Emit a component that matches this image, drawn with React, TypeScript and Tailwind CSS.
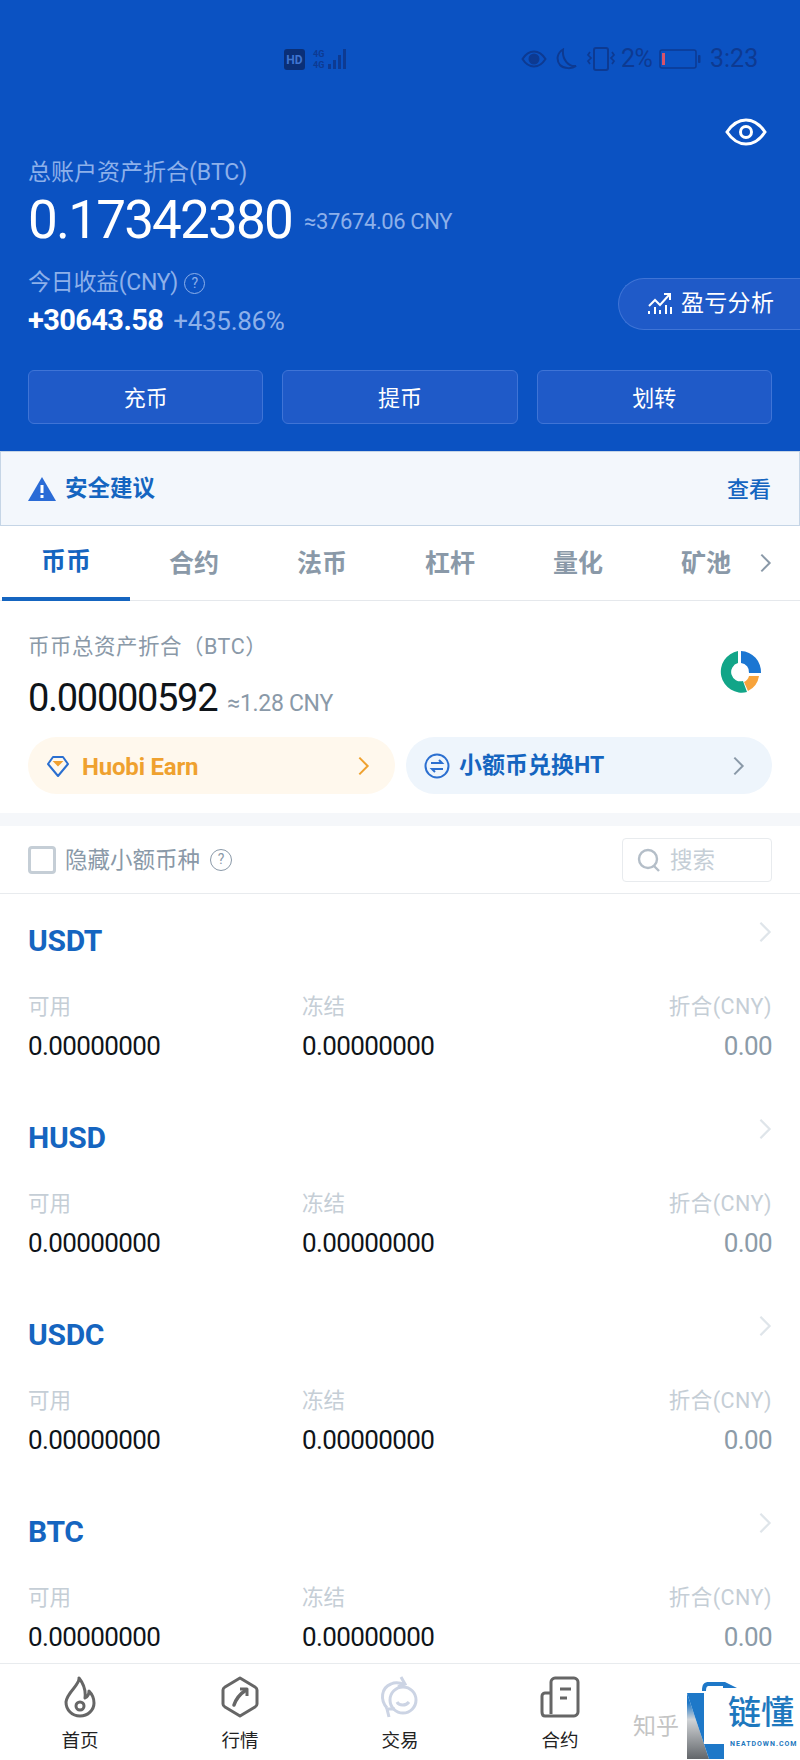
const cjk = "font-['Roboto','Noto_Sans_CJK_SC',sans-serif]";

const tabs = ["币币", "合约", "法币", "杠杆", "量化", "矿池"];
const coins = ["USDT", "HUSD", "USDC", "BTC"];

function Chevron({ className }: { className: string }) {
  return (
    <svg viewBox="0 0 14 24" fill="none" stroke="currentColor" strokeWidth="2.4" className={className}>
      <path d="M2 2l10 10L2 22" />
    </svg>
  );
}

function StatusBar() {
  const c = "#0d3a92";
  return (
    <div className="mt-[48px] h-[22px] flex items-center justify-between pl-[284px] pr-[44px] text-[#0d3a92]">
      <svg width="66" height="22" viewBox="0 0 66 22">
        <rect width="21" height="21" y="1" rx="3" fill="#0a2f77" />
        <text x="10.5" y="16" textAnchor="middle" fontSize="12" fontWeight="700" fill="#3f74d0" fontFamily="Roboto">HD</text>
        <text x="29" y="9" fontSize="9" fontWeight="700" fill={c} fontFamily="Roboto">4G</text>
        <text x="29" y="20" fontSize="9" fontWeight="700" fill={c} fontFamily="Roboto">4G</text>
        <rect x="44" y="16" width="3" height="5" fill={c} />
        <rect x="49" y="12" width="3" height="9" fill={c} />
        <rect x="54" y="7" width="3" height="14" fill={c} />
        <rect x="59" y="1" width="3" height="20" fill={c} />
      </svg>
      <div className="flex items-center">
        <svg width="26" height="18" viewBox="0 0 26 18" fill="none" stroke={c} strokeWidth="2">
          <path d="M1.5 9C5 3.5 9 1.5 13 1.5S21 3.5 24.5 9C21 14.5 17 16.500 13 16.500S5 14.500 1.5 9z" />
          <circle cx="13" cy="9" r="4.500" fill={c} />
        </svg>
        <svg width="24" height="22" viewBox="0 0 24 22" fill="none" stroke={c} strokeWidth="2" className="ml-[7px]">
          <path d="M9 1.500C3 5 2 12 6 17c4 4 12 4 16 1-7 1-14-6-13-16.500z" />
        </svg>
        <svg width="30" height="24" viewBox="0 0 30 24" fill="none" stroke={c} strokeWidth="2" className="ml-[8px]">
          <rect x="8" y="1" width="14" height="22" rx="2" />
          <path d="M4 5l-2 3 3 3-3 3 2 3M26 5l2 3-3 3 3 3-2 3" strokeWidth="1.700" />
        </svg>
        <span className={`${cjk} ml-[5px] text-[25px] leading-[22px] tracking-[-0.500px] w-[37px]`}>2%</span>
        <svg width="42" height="20" viewBox="0 0 42 20" fill="none" className="ml-[1px]">
          <rect x="1" y="1" width="36" height="18" rx="2" stroke={c} strokeWidth="1.500" />
          <rect x="3" y="4" width="3" height="12" fill="#d8536a" />
          <rect x="39" y="6" width="2.500" height="8" rx="1" fill={c} />
        </svg>
        <span className={`${cjk} ml-[9px] text-[25px] leading-[22px] w-[46px]`}>3:23</span>
      </div>
    </div>
  );
}

function Header() {
  return (
    <div className="h-[451px] bg-[#0b52c2] flex flex-col">
      <StatusBar />
      <svg width="42" height="28" viewBox="0 0 42 28" fill="none" stroke="white" strokeWidth="3" className="mt-[48px] self-end mr-[33px]">
        <path d="M2 14C8 5 14 2 21 2s13 3 19 12c-6 9-12 12-19 12S8 23 2 14z" />
        <circle cx="21" cy="14" r="5.500" />
      </svg>
      <div className={`${cjk} mt-[12px] px-[28px] text-[23px] leading-[30px] text-[#8db0ea]`}>总账户资产折合(BTC)</div>
      <div className={`${cjk} mt-[7px] px-[28px] h-[50px] flex items-center`}>
        <span className="text-[53px] leading-[50px] tracking-[-1.800px] text-white">0.17342380</span>
        <span className="ml-[12px] mt-[3px] text-[22px] tracking-[-0.400px] text-[#8db0ea]">≈37674.06 CNY</span>
      </div>
      <div className="flex justify-between">
        <div className={`${cjk} pl-[28px]`}>
          <div className="mt-[23px] flex items-center text-[23px] leading-[30px] tracking-[-0.300px] text-[#8db0ea]">
            今日收益(CNY)
            <span className="ml-[6px] w-[21px] h-[21px] rounded-full border-[1.500px] border-[#8db0ea] text-[14px] leading-[18px] text-center">?</span>
          </div>
          <div className="mt-[7px] flex items-baseline h-[30px] leading-[30px]">
            <span className="text-[29px] font-bold tracking-[-0.600px] text-white">+30643.58</span>
            <span className="ml-[10px] text-[26px] tracking-[-0.300px] text-[#8db0ea]">+435.86%</span>
          </div>
        </div>
        <div className={`${cjk} self-end mb-[5px] w-[182px] h-[52px] rounded-l-[26px] border border-r-0 border-[#3f74d6] bg-[#1f5ac8] flex items-center pl-[28px] text-[23px] text-white`}>
          <svg width="26" height="24" viewBox="0 0 26 24" fill="none" stroke="white" strokeWidth="2">
            <path d="M2 14l6-6 5 5 9-10M17 2h6v6" />
            <path d="M2 22v-3M8 22v-7M13 22v-4M19 22v-9M24 22v-7" />
          </svg>
          <span className="ml-[8px] pt-[1px] tracking-[0.300px]">盈亏分析</span>
        </div>
      </div>
      <div className={`${cjk} mt-[35px] px-[28px] grid grid-cols-3 gap-[19px]`}>
        {["充币", "提币", "划转"].map((t) => (
          <div key={t} className="h-[54px] pt-[3px] rounded-[6px] border border-[#3f74d6] bg-[#1f5ac8] flex items-center justify-center text-[22px] text-white">
            {t}
          </div>
        ))}
      </div>
    </div>
  );
}

function AlertBar() {
  return (
    <div className={`${cjk} h-[75px] bg-[#f3f7fc] border border-[#c5d5e6] flex items-center justify-between pl-[27px] pr-[28px] text-[#1565c0]`}>
      <div className="flex items-center">
        <svg width="28" height="24" viewBox="0 0 28 24">
          <path d="M14 0L28 24H0z" fill="#2a6bd6" />
          <rect x="12.500" y="8" width="3" height="8" fill="white" />
          <rect x="12.500" y="18" width="3" height="3" fill="white" />
        </svg>
        <span className="ml-[9px] pt-[1px] text-[22.500px] font-bold">安全建议</span>
      </div>
      <span className="pt-[1px] text-[22px] font-medium">查看</span>
    </div>
  );
}

function Tabs() {
  return (
    <div className={`${cjk} h-[75px] border-b border-[#e5e8ec] flex relative`}>
      <div className="flex pl-[2px]">
        {tabs.map((t, i) => (
          <div
            key={t}
            className={
              i === 0
                ? "w-[128px] h-[75px] border-b-[4px] border-[#1565c0] flex items-center justify-center text-[25px] font-bold text-[#1565c0]"
                : "w-[128px] h-[75px] flex items-center justify-center text-[25px] font-bold text-[#8a99a8]"
            }
          >
            <span className="pt-[1px]">{t}</span>
          </div>
        ))}
      </div>
      <Chevron className="absolute left-[759px] top-[27px] w-[13px] h-[20px] text-[#8a99a8]" />
    </div>
  );
}

function Overview() {
  return (
    <div className={`${cjk} h-[212px] px-[28px] flex flex-col`}>
      <div className="flex justify-between">
        <div>
          <div className="mt-[31px] text-[21.500px] leading-[30px] tracking-[0.500px] text-[#8a99a8]">币币总资产折合（BTC）</div>
          <div className="mt-[14px] flex items-baseline h-[44px]">
            <span className="text-[38px] leading-[44px] tracking-[-1.300px] text-[#0f1419]">0.00000592</span>
            <span className="ml-[10px] text-[23px] tracking-[-0.300px] text-[#8a99a8]">≈1.28 CNY</span>
          </div>
        </div>
        <svg width="44" height="44" viewBox="0 0 44 44" className="mt-[50px] mr-[9px]">
          <path d="M19 0A21 21 0 1 0 28 41L24 30A9 9 0 1 1 19 12z" fill="#12a588" />
          <path d="M22 0A21 21 0 0 1 42 22H30A9 9 0 0 0 22 12z" fill="#1b76d2" />
          <path d="M40 25A20 20 0 0 1 29 40L25 31A9 9 0 0 0 30 25z" fill="#f7a33b" />
        </svg>
      </div>
      <div className="mt-[17px] flex gap-[11px]">
        <div className="w-[367px] h-[57px] rounded-full bg-[#fff8ed] flex items-center justify-between pl-[18px] pr-[25px]">
          <div className="flex items-center">
            <svg width="24" height="24" viewBox="0 0 24 24" fill="none" stroke="#2b6fd0" strokeWidth="2">
              <path d="M7 3h10l5 7-10 12L2 10z" strokeLinejoin="round" />
              <path d="M9 8h6l-3 3z" fill="#f0a030" stroke="#f0a030" />
            </svg>
            <span className="ml-[12px] pt-[2px] text-[24px] font-bold text-[#efa12f] tracking-[-0.200px]">Huobi Earn</span>
          </div>
          <Chevron className="w-[13px] h-[20px] text-[#efa12f]" />
        </div>
        <div className="flex-1 h-[57px] rounded-full bg-[#eef5fc] flex items-center justify-between pl-[18px] pr-[27px]">
          <div className="flex items-center">
            <svg width="26" height="26" viewBox="0 0 26 26" fill="none" stroke="#2b6fd0" strokeWidth="2">
              <circle cx="13" cy="13" r="11.500" />
              <path d="M7 10h11l-3-3M19 16H8l3 3" />
            </svg>
            <span className="ml-[9px] pt-[2px] text-[23px] font-bold text-[#1565c0]">小额币兑换HT</span>
          </div>
          <Chevron className="w-[13px] h-[20px] text-[#8a99a8]" />
        </div>
      </div>
    </div>
  );
}

function FilterBar() {
  return (
    <div className={`${cjk} h-[68px] border-b border-[#e8ebee] flex items-center justify-between px-[28px]`}>
      <div className="flex items-center">
        <div className="w-[28px] h-[28px] rounded-[4px] border-[3px] border-[#c5ced6]" />
        <span className="ml-[9px] pt-[2px] text-[22.500px] text-[#8a99a8]">隐藏小额币种</span>
        <span className="ml-[10px] w-[22px] h-[22px] rounded-full border-[1.500px] border-[#8a99a8] text-[14px] leading-[19px] text-center text-[#8a99a8]">?</span>
      </div>
      <div className="w-[150px] h-[44px] rounded-[4px] border border-[#e8ebee] flex items-center pl-[14px]">
        <svg width="24" height="24" viewBox="0 0 24 24" fill="none" stroke="#b4bec8" strokeWidth="2.400">
          <circle cx="11" cy="11" r="9" />
          <path d="M17 18l5 5" />
        </svg>
        <span className="ml-[9px] pt-[2px] text-[22.500px] text-[#c5ced6]">搜索</span>
      </div>
    </div>
  );
}

function CoinRow({ name }: { name: string }) {
  return (
    <div className={`${cjk} h-[197px] shrink-0 px-[28px] pt-[30px]`}>
      <div className="flex justify-between items-start">
        <span className="text-[30px] leading-[34px] font-bold text-[#1565c0] tracking-[-0.300px]">{name}</span>
        <Chevron className="-mt-[3px] w-[14px] h-[22px] text-[#dfe5ea]" />
      </div>
      <div className="mt-[34px] grid grid-cols-[274px_1fr_auto] text-[21.500px] leading-[30px] text-[#c5ced6]">
        <span>可用</span>
        <span>冻结</span>
        <span className="tracking-[0.500px]">折合(CNY)</span>
      </div>
      <div className="mt-[9px] grid grid-cols-[274px_1fr_auto] text-[26px] leading-[30px] tracking-[-0.600px] text-[#0f1419]">
        <span>0.00000000</span>
        <span>0.00000000</span>
        <span className="text-[#8c9ba8]">0.00</span>
      </div>
    </div>
  );
}

function NavIcon({ index }: { index: number }) {
  if (index === 0) {
    return (
      <svg width="36" height="42" viewBox="0 0 36 42" fill="none" stroke="#666" strokeWidth="3">
        <path d="M17 2c1 7-12 14-13 24 0 8 6 14 14 14s14-6 14-13c0-5-2-9-5-12 0 4-2 6-4 7 1-8-2-15-6-20z" strokeLinejoin="round" />
        <circle cx="18" cy="30" r="4" />
      </svg>
    );
  }
  if (index === 1) {
    return (
      <svg width="38" height="42" viewBox="0 0 38 42" fill="none" stroke="#666" strokeWidth="3">
        <path d="M19 2l15 9c1 .6 2 2 2 3v14c0 1-1 2.400-2 3l-15 9-15-9c-1-.6-2-2-2-3V14c0-1 1-2.400 2-3z" strokeLinejoin="round" />
        <path d="M13 29c2-6 6-11 12-15" strokeWidth="3.500" strokeLinecap="round" />
        <path d="M19 13h7v7" strokeLinejoin="round" />
      </svg>
    );
  }
  if (index === 2) {
    return (
      <svg width="42" height="42" viewBox="0 0 42 42" fill="none" stroke="#ccd4e4" strokeWidth="3">
        <circle cx="24" cy="24" r="13" />
        <path d="M18 26c2 4 9 4 12 0" />
        <path d="M8 32C1 24 2 12 12 8c4-2 10-1 14 1M22 1l4 7-7 3" />
        <path d="M10 41l-2-8 8 0" />
      </svg>
    );
  }
  return (
    <svg width="40" height="42" viewBox="0 0 40 42" fill="none" stroke="#666" strokeWidth="3">
      <path d="M11 38V6c0-2 2-4 4-4h19c2 0 4 2 4 4v30c0 2-2 4-4 4H5c-2 0-3-2-3-4V20c0-2 2-3 3-3h6" strokeLinejoin="round" />
      <path d="M20 13h11M20 22h7" />
    </svg>
  );
}

function BottomNav() {
  return (
    <div className={`${cjk} relative h-[97px] shrink-0 bg-white border-t border-[#e8ebee] grid grid-cols-5`}>
      {["首页", "行情", "交易", "合约", ""].map((t, i) => (
        <div key={i} className="flex flex-col items-center pt-[12px]">
          {i < 4 && <NavIcon index={i} />}
          <span className="mt-[10px] text-[18.500px] leading-[26px] text-[#222]">{t}</span>
        </div>
      ))}
      {/* watermark */}
      <span className="absolute left-[633px] top-[50px] text-[23px] leading-[26px] text-[#c4c4c4]">知乎</span>
      <div className="absolute left-[687px] top-[12px] w-[113px] h-[85px] bg-white">
        <svg width="60" height="85" viewBox="0 0 60 85" className="absolute left-0 top-0">
          <defs>
            <linearGradient id="wm" x1="0" y1="0" x2="0" y2="1">
              <stop offset="0.150" stopColor="#1e78c8" />
              <stop offset="0.400" stopColor="#d0d3d6" />
              <stop offset="1" stopColor="#62666a" />
            </linearGradient>
          </defs>
          <path d="M0 17V83H22z" fill="url(#wm)" />
          <path d="M0 17H17V68H37V83H22z" fill="#1e78c8" />
          <path d="M15 15C15 8 17 6 22 6H38L50 12H36V10H22C20 10 19 11 19 15z" fill="#1e78c8" />
        </svg>
        <span className="absolute left-[41px] top-[17px] text-[33px] leading-[40px] font-medium text-[#1e78be] whitespace-nowrap">链懂</span>
        <span className="absolute left-[43px] top-[63px] font-['Roboto',sans-serif] text-[7px] leading-[10px] font-bold tracking-[1px] text-[#1e78be]">NEATDOWN.COM</span>
      </div>
    </div>
  );
}

export default function App() {
  return (
    <div className="w-[800px] h-[1760px] bg-white flex flex-col overflow-hidden">
      <Header />
      <AlertBar />
      <Tabs />
      <Overview />
      <div className="h-[13px] bg-[#f5f7fa] shrink-0" />
      <FilterBar />
      <div className="flex-1 overflow-hidden">
        {coins.map((c) => (
          <CoinRow key={c} name={c} />
        ))}
      </div>
      <BottomNav />
    </div>
  );
}
